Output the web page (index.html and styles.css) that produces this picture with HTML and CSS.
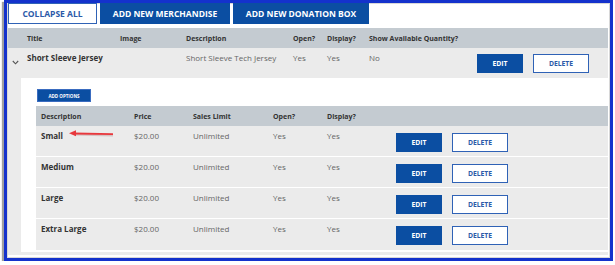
FILE: index.html
```html
<!DOCTYPE html>
<html>
<head>
<meta charset="utf-8">
<link rel="stylesheet" href="styles.css">
</head>
<body>
<div class="frame">
  <div class="toolbar">
    <button class="btn-outline big w90">COLLAPSE ALL</button>
    <button class="btn-solid big w130">ADD NEW MERCHANDISE</button>
    <button class="btn-solid big w136">ADD NEW DONATION BOX</button>
  </div>
  <div class="main-grid head">
    <span></span>
    <span>Title</span>
    <span>Image</span>
    <span>Description</span>
    <span>Open?</span>
    <span>Display?</span>
    <span>Show Available Quantity?</span>
  </div>
  <div class="item">
    <div class="main-grid item-row">
      <span class="chev"><svg width="7" height="5" viewBox="0 0 7 5"><polyline points="0.8,1 3.5,3.8 6.2,1" fill="none" stroke="#555" stroke-width="1.1"/></svg></span>
      <span class="strong">Short Sleeve Jersey</span>
      <span></span>
      <span>Short Sleeve Tech Jersey</span>
      <span>Yes</span>
      <span>Yes</span>
      <span class="last">No
        <span class="actions">
          <button class="btn-solid sm">EDIT</button>
          <button class="btn-outline sm del">DELETE</button>
        </span>
      </span>
    </div>
    <div class="detail">
      <button class="btn-solid tiny">ADD OPTIONS</button>
      <div class="sub-grid sub-head">
        <span class="c1">Description</span>
        <span>Price</span>
        <span>Sales Limit</span>
        <span>Open?</span>
        <span>Display?</span>
        <span></span>
      </div>
      <div class="sub-grid sub-row">
        <span class="c1 strong">Small</span>
        <span>$20.00</span>
        <span>Unlimited</span>
        <span>Yes</span>
        <span>Yes</span>
        <span class="actions"><button class="btn-solid sm">EDIT</button><button class="btn-outline sm del">DELETE</button></span>
        <svg class="arrow" width="50" height="10" viewBox="0 0 50 10"><line x1="6" y1="4.5" x2="45" y2="5.5" stroke="#c9a9a9" stroke-width="2" opacity="0.6" transform="translate(0,1)"/><line x1="6" y1="4.5" x2="45" y2="5.2" stroke="#e8383d" stroke-width="1.8"/><polygon points="1,4.3 8,1.3 8,7.3" fill="#e8383d"/></svg>
      </div>
      <div class="sub-grid sub-row">
        <span class="c1 strong">Medium</span>
        <span>$20.00</span>
        <span>Unlimited</span>
        <span>Yes</span>
        <span>Yes</span>
        <span class="actions"><button class="btn-solid sm">EDIT</button><button class="btn-outline sm del">DELETE</button></span>
      </div>
      <div class="sub-grid sub-row">
        <span class="c1 strong">Large</span>
        <span>$20.00</span>
        <span>Unlimited</span>
        <span>Yes</span>
        <span>Yes</span>
        <span class="actions"><button class="btn-solid sm">EDIT</button><button class="btn-outline sm del">DELETE</button></span>
      </div>
      <div class="sub-grid sub-row">
        <span class="c1 strong">Extra Large</span>
        <span>$20.00</span>
        <span>Unlimited</span>
        <span>Yes</span>
        <span>Yes</span>
        <span class="actions"><button class="btn-solid sm">EDIT</button><button class="btn-outline sm del">DELETE</button></span>
      </div>
    </div>
  </div>
</div>
</body>
</html>
```
FILE: styles.css
```css
* { box-sizing: border-box; }
html, body { margin: 0; padding: 0; background: #fff; }
body {
  font-family: "Open Sans", "Noto Sans", sans-serif;
  font-size: 8px;
  color: #666;
}
.frame {
  margin-left: 4px;
  width: 609px;
  height: 261px;
  border: 3px solid #1432cc;
  box-shadow: -2px 2px 1px #a0a0a0, inset 0 0 0 1px #d8d8d8;
  padding: 0 2px 3px 1px;
  display: flex;
  flex-direction: column;
}
button {
  font-family: inherit;
  font-weight: 700;
  cursor: pointer;
  padding: 0;
  margin: 0;
}
.btn-solid {
  background: #0b4ea2;
  color: #fff;
  border: 1px solid #0b4ea2;
}
.btn-outline {
  background: #fff;
  color: #2b5aa8;
  border: 1px solid #2f62b6;
}
.toolbar {
  display: flex;
  gap: 3px;
  height: 21px;
  margin-bottom: 4px;
}
.big { height: 21px; font-size: 8.5px; letter-spacing: 0; }
.w90 { width: 89px; }
.w130 { width: 130px; }
.w136 { width: 136px; }

.main-grid {
  display: grid;
  grid-template-columns: 19px 93px 66px 107px 34px 42px 1fr;
}
.head {
  background: #c4cbd1;
  height: 20px;
  align-items: center;
  font-weight: 700;
  color: #333;
  font-size: 7px;
}
.item {
  background: #ebebeb;
  flex: 1;
  padding-bottom: 3px;
  display: flex;
  flex-direction: column;
}
.item-row {
  height: 30px;
  padding-top: 4px;
  font-size: 8px;
}
.chev { padding: 4px 0 0 4px; }
.strong { font-weight: 700; color: #333; }
.last { display: flex; align-items: flex-start; }
.item-row .actions { margin-left: auto; margin-right: 19px; margin-top: 2px; }
.actions { display: flex; gap: 10px; }
.sm { height: 19px; width: 46px; font-size: 6.8px; }
.sm.del { width: 56px; }

.detail {
  margin-left: 13px;
  background: #fff;
  flex: 1;
  padding: 11px 0 2px 15px;
  display: flex;
  flex-direction: column;
}
.tiny {
  align-self: flex-start;
  margin-left: 1px;
  width: 54px;
  height: 13px;
  font-size: 4.5px;
  border-color: #3a6cc0;
  margin-bottom: 4px;
}
.sub-grid {
  display: grid;
  grid-template-columns: 98px 59px 80px 54px 69px 1fr;
}
.c1 { padding-left: 5px; }
.sub-head {
  background: #c4cbd1;
  height: 20px;
  align-items: center;
  font-weight: 700;
  color: #333;
  font-size: 7px;
}
.sub-row {
  position: relative;
  background: #ebebeb;
  height: 31px;
  padding-top: 4px;
  font-size: 8px;
  border-bottom: 1px solid #fff;
}
.sub-row:last-child { border-bottom: 0; }
.sub-row .actions { margin-top: 3px; }
.arrow {
  position: absolute;
  left: 32px;
  top: 3px;
}
```
